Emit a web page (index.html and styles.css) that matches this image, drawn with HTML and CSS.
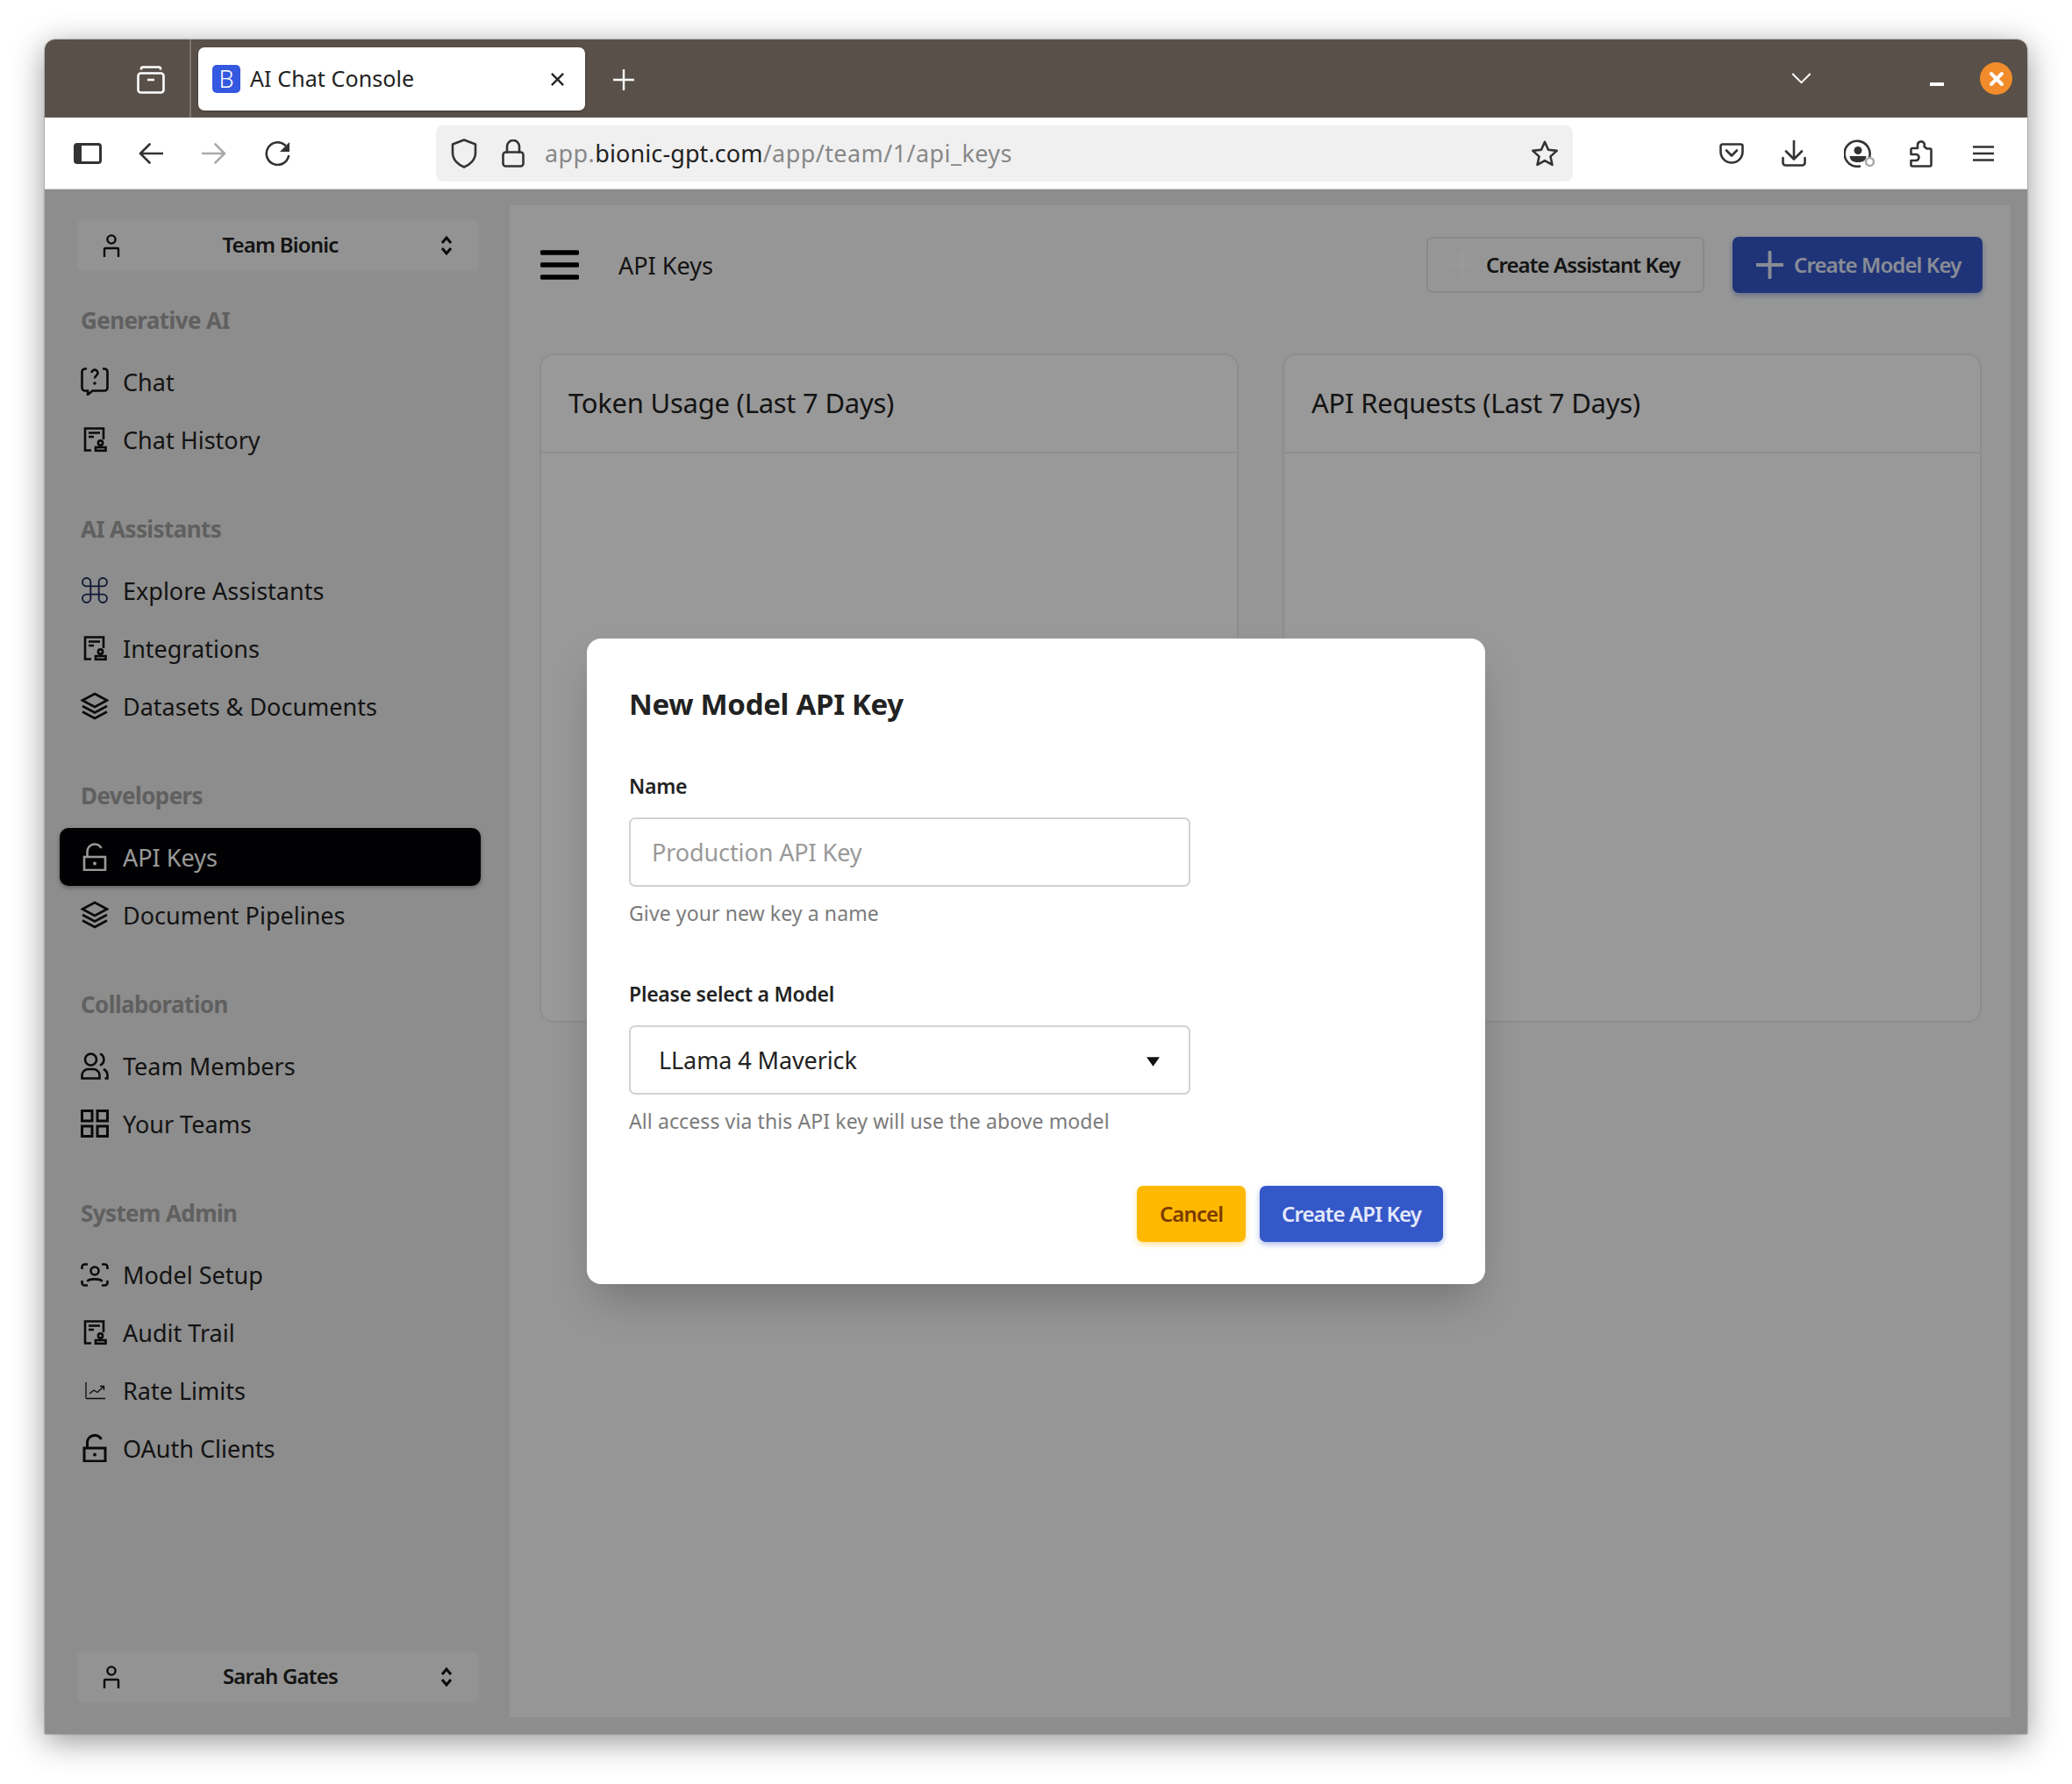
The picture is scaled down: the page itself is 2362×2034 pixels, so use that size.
FILE: index.html
```html
<!DOCTYPE html>
<html lang="en">
<head>
<meta charset="utf-8">
<title>AI Chat Console</title>
<link rel="stylesheet" href="styles.css">
</head>
<body>
<svg class="sprite" xmlns="http://www.w3.org/2000/svg">
  <symbol id="i-person" viewBox="0 0 20 26"><circle cx="10" cy="6" r="4.6"/><path d="M2 26v-9a1 1 0 0 1 1-1h14a1 1 0 0 1 1 1v9"/></symbol>
  <symbol id="i-updown" viewBox="0 0 14 24"><path d="M2 9l5-6 5 6M2 15l5 6 5-6"/></symbol>
  <symbol id="i-chat" viewBox="0 0 32 32"><path d="M7 1.500H5A3.500 3.500 0 0 0 1.500 5v18A3.500 3.500 0 0 0 5 26.500h3v4.500l5.500-4.500H27a3.500 3.500 0 0 0 3.500-3.500V5A3.500 3.500 0 0 0 27 1.500h-2"/><path d="M12.500 6a3.500 3.500 0 1 1 5.500 3c-1.400 1-2 1.600-2 3.500"/><circle class="dot" cx="16" cy="18" r="1.800"/></symbol>
  <symbol id="i-doc" viewBox="0 0 32 32"><path d="M12 28.500H5V3.500h21V16"/><path d="M9 8.500h13M9 13h6"/><circle cx="22.500" cy="20" r="2.600"/><rect x="17" y="25" width="11.500" height="3.800"/></symbol>
  <symbol id="i-cmd" viewBox="1.700 1.700 20.600 20.600"><path d="M15 6v12a3 3 0 1 0 3-3H6a3 3 0 1 0 3 3V6a3 3 0 1 0-3 3h12a3 3 0 1 0-3-3"/></symbol>
  <symbol id="i-layers" viewBox="0 0 32 32"><path d="M16 2L30 9.500 16 17 2 9.500zM2 16l14 7.500L30 16M2 22.500l14 7.500 14-7.500"/></symbol>
  <symbol id="i-lock" viewBox="0 0 32 32"><rect x="4" y="16" width="24" height="15"/><path d="M7.500 16V10a8.500 8.500 0 0 1 16-4"/><circle class="dot" cx="16" cy="23.500" r="2"/></symbol>
  <symbol id="i-users" viewBox="0 0 32 32"><circle cx="11.500" cy="9" r="6.500"/><path d="M1.500 30.500V27a7 7 0 0 1 7-7h6a7 7 0 0 1 7 7v3.500z"/><path d="M22 2.500a7 7 0 0 1 0 13M26 20c3 1.500 4.500 4 4.500 7v3.500h-3"/></symbol>
  <symbol id="i-grid" viewBox="0 0 32 32"><rect x="1.500" y="1.500" width="11.500" height="11.500"/><rect x="19" y="1.500" width="11.500" height="11.500"/><rect x="1.500" y="19" width="11.500" height="11.500"/><rect x="19" y="19" width="11.500" height="11.500"/></symbol>
  <symbol id="i-scan" viewBox="0 0 32 32"><path d="M8 4.500H4.500a3 3 0 0 0-3 3V10M24 4.500h3.500a3 3 0 0 1 3 3V10M8 28.500H4.500a3 3 0 0 1-3-3V23M24 28.500h3.500a3 3 0 0 0 3-3V23"/><circle cx="16" cy="12" r="4.500"/><path d="M7.500 24c2-3.500 15-3.500 17 0"/></symbol>
  <symbol id="i-chart" viewBox="0 0 32 32"><path d="M6 7v17.500a1 1 0 0 0 1 1h21"/><path d="M10 20l5-4 4 2.500 7-6.500M22 11.500h4.500V16"/></symbol>
  <symbol id="i-plus" viewBox="0 0 32 32"><path d="M16 1v30M1 16h30"/></symbol>
</svg>

<div class="window">
  <header class="tabbar">
    <div class="tabbar-left">
      <svg class="ff-archive" viewBox="0 0 32 32"><path d="M5 4.500V3.500a2 2 0 0 1 2-2h18a2 2 0 0 1 2 2v1"/><rect x="1.500" y="8.500" width="29" height="22" rx="3"/><path d="M12 16h8"/></svg>
    </div>
    <div class="tab">
      <span class="favicon">B</span>
      <span class="tab-title">AI Chat Console</span>
      <svg class="tab-close" viewBox="0 0 18 18"><path d="M2 2l14 14M16 2L2 16"/></svg>
    </div>
    <svg class="new-tab" viewBox="0 0 24 24"><path d="M12 0v24M0 12h24"/></svg>
    <svg class="tab-list" viewBox="0 0 24 14"><path d="M1 1l11 11L23 1"/></svg>
    <span class="win-min"></span>
    <span class="win-close"><svg viewBox="0 0 18 18"><path d="M3 3l12 12M15 3L3 15"/></svg></span>
  </header>

  <nav class="toolbar">
    <svg class="tb tb-sidebar" viewBox="0 0 32 24"><rect x="1.500" y="1.500" width="29" height="21" rx="2.500"/><path class="fill" d="M1.500 3a1.500 1.500 0 0 1 1.500-1.500h6v21H3A1.500 1.500 0 0 1 1.500 21z"/></svg>
    <svg class="tb tb-back" viewBox="0 0 28 24"><path d="M28 12H2M12.500 1.500L2 12l10.500 10.500"/></svg>
    <svg class="tb tb-forward" viewBox="0 0 28 24"><path d="M0 12h26M15.500 1.500L26 12 15.500 22.500"/></svg>
    <svg class="tb tb-reload" viewBox="0 0 30 28"><path d="M28 17A12.800 12.800 0 1 1 24 4.500"/><path class="fill" d="M29 1v11H18z"/></svg>
    <div class="urlbar">
      <svg class="tb-shield" viewBox="0 0 30 34"><path d="M15 1.500L28 6.500v10c0 8-7 13.500-13 16-6-2.500-13-8-13-16v-10z"/></svg>
      <svg class="tb-lock" viewBox="0 0 26 32"><rect x="1.500" y="14.500" width="23" height="16" rx="3"/><path d="M6 14.500V8a7 7 0 0 1 14 0v6.500"/></svg>
      <span class="url"><span class="url-dim">app.</span>bionic-gpt.com<span class="url-dim">/app/team/1/api_keys</span></span>
      <svg class="tb-star" viewBox="0 0 32 30"><path d="M16 1.800l4 9 9.700 1.100-7.200 6.500 2 9.500L16 23.100l-8.500 4.800 2-9.500L2.300 11.900 12 10.800z"/></svg>
    </div>
    <svg class="tb tb-pocket" viewBox="0 0 28 24"><path d="M3.500 1.500h21a2 2 0 0 1 2 2V10a12.500 12.500 0 0 1-25 0V3.500a2 2 0 0 1 2-2z"/><path d="M8 8.500l6 6 6-6"/></svg>
    <svg class="tb tb-download" viewBox="0 0 28 30"><path d="M14 0v21M5 12.500l9 9 9-9M1.500 20v5.500a3 3 0 0 0 3 3h19a3 3 0 0 0 3-3V20"/></svg>
    <svg class="tb tb-account" viewBox="0 0 36 32"><path d="M29 20.500A14.500 14.500 0 1 0 18 30.500"/><circle class="fill" cx="16" cy="12.500" r="4.500"/><path class="fill" d="M6.500 19h19c-.5 4.500-3 7-9.500 7s-9-2.500-9.500-7z"/><circle class="ring" cx="29.500" cy="25.500" r="4.500"/></svg>
    <svg class="tb tb-puzzle" viewBox="0 0 26 32"><path d="M9 10V6.500a4 4 0 0 1 7.500-2c.6 1.200.5 2.500 0 3.500l3 2.500h3.500a1.500 1.500 0 0 1 1.500 1.500v17a1.500 1.500 0 0 1-1.500 1.500H3a1.500 1.500 0 0 1-1.500-1.500V24H7a3.500 3.500 0 0 0 0-7H1.500v-5.500A1.500 1.500 0 0 1 3 10z"/></svg>
    <svg class="tb tb-menu" viewBox="0 0 24 18"><path d="M0 1.500h24M0 9h24M0 16.500h24"/></svg>
  </nav>

  <div class="content">
    <aside class="sidebar">
      <button class="switcher switcher-top" type="button">
        <svg class="sw-person"><use href="#i-person"/></svg>
        <span>Team Bionic</span>
        <svg class="sw-updown"><use href="#i-updown"/></svg>
      </button>

      <section class="group">
        <h3>Generative AI</h3>
        <a class="item"><svg><use href="#i-chat"/></svg>Chat</a>
        <a class="item"><svg><use href="#i-doc"/></svg>Chat History</a>
      </section>
      <section class="group">
        <h3>AI Assistants</h3>
        <a class="item"><svg class="navy thin"><use href="#i-cmd"/></svg>Explore Assistants</a>
        <a class="item"><svg><use href="#i-doc"/></svg>Integrations</a>
        <a class="item"><svg><use href="#i-layers"/></svg>Datasets &amp; Documents</a>
      </section>
      <section class="group">
        <h3>Developers</h3>
        <a class="item active"><svg><use href="#i-lock"/></svg>API Keys</a>
        <a class="item"><svg><use href="#i-layers"/></svg>Document Pipelines</a>
      </section>
      <section class="group">
        <h3>Collaboration</h3>
        <a class="item"><svg><use href="#i-users"/></svg>Team Members</a>
        <a class="item"><svg class="heavy"><use href="#i-grid"/></svg>Your Teams</a>
      </section>
      <section class="group">
        <h3>System Admin</h3>
        <a class="item"><svg><use href="#i-scan"/></svg>Model Setup</a>
        <a class="item"><svg><use href="#i-doc"/></svg>Audit Trail</a>
        <a class="item"><svg class="hair"><use href="#i-chart"/></svg>Rate Limits</a>
        <a class="item"><svg class="heavy"><use href="#i-lock"/></svg>OAuth Clients</a>
      </section>

      <button class="switcher switcher-bottom" type="button">
        <svg class="sw-person"><use href="#i-person"/></svg>
        <span>Sarah Gates</span>
        <svg class="sw-updown"><use href="#i-updown"/></svg>
      </button>
    </aside>

    <main class="panel">
      <div class="panel-head">
        <svg class="burger" viewBox="0 0 44 34"><path d="M2 3h40M2 17h40M2 31h40"/></svg>
        <span class="crumb">API Keys</span>
        <button class="btn btn-outline" type="button"><svg class="plus plus-faint"><use href="#i-plus"/></svg>Create Assistant Key</button>
        <button class="btn btn-primary" type="button"><svg class="plus"><use href="#i-plus"/></svg>Create Model Key</button>
      </div>
      <div class="cards">
        <article class="card"><h2>Token Usage (Last 7 Days)</h2></article>
        <article class="card"><h2>API Requests (Last 7 Days)</h2></article>
      </div>
    </main>

    <div class="backdrop">
      <form class="modal">
        <h1>New Model API Key</h1>
        <div class="field">
          <label for="key-name">Name</label>
          <input id="key-name" type="text" placeholder="Production API Key">
          <p class="help">Give your new key a name</p>
        </div>
        <div class="field">
          <label for="key-model">Please select a Model</label>
          <div class="select-wrap">
            <select id="key-model"><option>LLama 4 Maverick</option></select>
            <svg class="select-arrow" viewBox="0 0 16 11"><path d="M0 0h16L8 11z"/></svg>
          </div>
          <p class="help">All access via this API key will use the above model</p>
        </div>
        <div class="modal-actions">
          <button class="btn btn-warning" type="button">Cancel</button>
          <button class="btn btn-primary btn-modal" type="button">Create API Key</button>
        </div>
      </form>
    </div>
  </div>
</div>
</body>
</html>
```

FILE: styles.css
```css
* { box-sizing: border-box; }
html, body { margin: 0; height: 100%; }
body {
  background: #fff;
  padding: 45px 51px 57px 51px;
  font-family: "Noto Sans", "Open Sans", sans-serif;
  color: #222;
}
.sprite { display: none; }

.window {
  height: 1932px;
  display: flex;
  flex-direction: column;
  border-radius: 12px 12px 0 0;
  overflow: hidden;
  box-shadow: 0 8px 36px rgba(0, 0, 0, .42), 0 0 2px rgba(0, 0, 0, .5);
}

/* Browser chrome */
.tabbar {
  height: 89px;
  flex: none;
  background: #595049;
  display: flex;
  align-items: flex-start;
}
.tabbar-left {
  width: 167px;
  height: 100%;
  border-right: 2px solid #7d7670;
  padding: 30px 0 0 105px;
  flex: none;
}
.ff-archive { width: 32px; height: 32px; display: block; fill: none; stroke: #fff; stroke-width: 2.6; }
.tab {
  margin: 9px 0 0 8px;
  width: 441px;
  height: 72px;
  background: #fff;
  border-radius: 7px;
  display: flex;
  align-items: center;
  padding: 0 23px 0 16px;
  box-shadow: 0 1px 3px rgba(0, 0, 0, .3);
}
.favicon {
  width: 32px;
  height: 32px;
  border-radius: 5px;
  background: #3558e0;
  color: #fff;
  font-size: 27px;
  font-weight: 300;
  line-height: 31px;
  text-align: center;
  flex: none;
}
.tab-title { margin: 0 0 2px 11px; font-size: 25px; letter-spacing: .1px; color: #222; flex: 1; white-space: nowrap; }
.tab-close { width: 17px; height: 17px; fill: none; stroke: #222; stroke-width: 2.4; }
.new-tab { width: 24px; height: 24px; margin: 34px 0 0 32px; fill: none; stroke: #fff; stroke-width: 2.4; flex: none; }
.tab-list { width: 23px; height: 13px; margin: 38px 0 0 1319px; fill: none; stroke: #fff; stroke-width: 2.2; flex: none; }
.win-min { width: 16px; height: 4px; margin: 49px 0 0 135px; background: #fff; flex: none; }
.win-close {
  width: 37px;
  height: 37px;
  margin: 26px 0 0 41px;
  border-radius: 50%;
  background: #f28c2b;
  display: flex;
  align-items: center;
  justify-content: center;
  flex: none;
}
.win-close svg { width: 18px; height: 18px; fill: none; stroke: #fff; stroke-width: 4; stroke-linecap: round; }

.toolbar {
  height: 82px;
  flex: none;
  background: #fff;
  display: flex;
  align-items: center;
  border-bottom: 1px solid #d4d4d4;
}
.tb, .toolbar .urlbar svg { fill: none; stroke: #333; stroke-width: 2.6; flex: none; stroke-linejoin: round; stroke-linecap: round; }
.toolbar .fill { fill: #333; stroke: none; }
.tb-sidebar { width: 32px; height: 24px; margin-left: 33px; stroke-width: 3; }
.tb-back { width: 28px; height: 24px; margin-left: 42px; }
.tb-forward { width: 28px; height: 24px; margin-left: 44px; stroke: #aaa; }
.tb-reload { width: 30px; height: 28px; margin-left: 43px; }
.urlbar {
  width: 1296px;
  height: 64px;
  margin-left: 166px;
  background: #f0f0f0;
  border-radius: 8px;
  display: flex;
  align-items: center;
  padding: 0 16px 0 17px;
  flex: none;
}
.tb-shield { width: 30px; height: 34px; }
.tb-lock { width: 26px; height: 32px; margin-left: 28px; }
.url { margin-left: 23px; font-size: 27px; letter-spacing: .1px; color: #222; flex: 1; white-space: nowrap; }
.url-dim { color: #888; letter-spacing: .42px; }
.tb-star { width: 32px; height: 30px; }
.tb-pocket { width: 28px; height: 24px; margin-left: 167px; }
.tb-download { width: 28px; height: 30px; margin-left: 43px; }
.tb-account { width: 36px; height: 32px; margin-left: 43px; }
.tb-account .ring { fill: #fff; stroke: #aaa; stroke-width: 2.6; }
.tb-puzzle { width: 26px; height: 32px; margin-left: 39px; }
.tb-menu { width: 24px; height: 18px; margin-left: 46px; }

/* App */
.content {
  flex: 1;
  min-height: 0;
  position: relative;
  display: flex;
  background: #ebebeb;
}
.sidebar {
  width: 529px;
  flex: none;
  display: flex;
  flex-direction: column;
  padding: 34px 0 35px;
}
.switcher {
  width: 460px;
  height: 60px;
  margin-left: 36px;
  flex: none;
  background: #f6f6f6;
  border: 2px solid #f1f1f1;
  border-radius: 8px;
  display: flex;
  align-items: center;
  padding: 0 29px 0 28px;
  font: 600 24px "Noto Sans", sans-serif;
  letter-spacing: -.8px;
  color: #222;
}
.switcher span { flex: 1; text-align: center; margin-bottom: 3px; }
.sw-person { width: 20px; height: 26px; flex: none; fill: none; stroke: #111; stroke-width: 2.400; }
.sw-updown { width: 14px; height: 24px; flex: none; fill: none; stroke: #111; stroke-width: 3; }
.switcher-bottom { margin-top: auto; }

.group { margin-top: 35px; margin-bottom: 14px; }
.group h3 {
  margin: 0 0 17px 41px;
  height: 40px;
  line-height: 40px;
  font-size: 26px;
  font-weight: 700;
  letter-spacing: -.6px;
  color: #a0a0a0;
}
.item {
  display: flex;
  align-items: center;
  gap: 16px;
  width: 480px;
  height: 66px;
  margin-left: 17px;
  padding-left: 24px;
  border-radius: 10px;
  font-size: 27px;
  color: #222;
}
.item svg { width: 32px; height: 32px; flex: none; fill: none; color: #111; stroke: #111; stroke-width: 2.600; }
.item svg.navy { stroke: #1c2a5a; }
.item svg.thin { stroke-width: 1.200; }
.item svg.heavy { stroke-width: 3; }
.item svg.hair { stroke-width: 1.300; }
.dot { fill: currentColor; stroke: none; }
.item.active {
  background: #030306;
  color: #fff;
  box-shadow: 0 2px 5px rgba(0, 0, 0, .35);
}
.item.active svg { color: #fff; stroke: #fff; }

.panel {
  flex: 1;
  margin: 17px 18px 18px 0;
  background: #fbfbfb;
  border: 1px solid #ececec;
  padding: 36px 32px 0 35px;
}
.panel-head { display: flex; align-items: center; height: 64px; }
.burger { width: 44px; height: 34px; fill: none; stroke: #000; stroke-width: 5.500; stroke-linecap: round; flex: none; }
.crumb { margin-left: 45px; font-size: 27px; flex: 1; color: #222; }
.btn {
  height: 64px;
  border-radius: 7px;
  display: inline-flex;
  align-items: center;
  font: 600 24px "Noto Sans", sans-serif;
  letter-spacing: -.9px;
  white-space: nowrap;
  padding: 0 23px 2px;
  border: 0;
}
.btn-outline { width: 317px; margin-right: 32px; background: transparent; border: 2px solid #e5e5e5; color: #222; }
.btn-primary { background: #3558c8; color: #e4e9fb; box-shadow: 0 3px 6px rgba(53, 88, 200, .4); }
.panel-head .btn-primary { width: 285px; padding-left: 27px; }
.plus { width: 31px; height: 32px; margin-top: 2px; fill: none; stroke: #e4e9fb; stroke-width: 4; stroke-linecap: round; margin-right: 12px; flex: none; }
.plus-faint { stroke: #fff; }

.cards { display: grid; grid-template-columns: 797px 797px; gap: 50px; margin: 69px 0 0 -1px; }
.card {
  height: 763px;
  background: #fff;
  border: 2px solid #ececec;
  border-radius: 16px;
}
.card h2 {
  margin: 0;
  height: 112px;
  padding: 0 0 2px 31px;
  display: flex;
  align-items: center;
  font-size: 31px;
  font-weight: 400;
  letter-spacing: -.25px;
  color: #222;
  border-bottom: 2px solid #ececec;
}

/* Modal */
.backdrop {
  position: absolute;
  inset: 0;
  padding-bottom: 1px;
  background: rgba(0, 0, 0, .4);
  display: flex;
  align-items: center;
  justify-content: center;
}
.modal {
  width: 1024px;
  height: 736px;
  background: #fff;
  border-radius: 16px;
  padding: 48px;
  box-shadow: 0 25px 50px -12px rgba(0, 0, 0, .25);
}
.modal h1 {
  margin: 0 0 50px;
  height: 54px;
  line-height: 54px;
  font-size: 33px;
  font-weight: 700;
  letter-spacing: -.3px;
  color: #222;
}
.field { margin-bottom: 58px; width: 640px; }
.field + .field { margin-bottom: 56px; }
.field label {
  display: block;
  height: 36px;
  line-height: 33px;
  margin-bottom: 16px;
  font-size: 23px;
  font-weight: 600;
  letter-spacing: -.25px;
  color: #222;
  white-space: nowrap;
}
.field input, .field select {
  display: block;
  width: 100%;
  height: 79px;
  border: 2px solid #d2d2d2;
  border-radius: 7px;
  background: #fff;
  font: 400 27px "Noto Sans", sans-serif;
  letter-spacing: -.1px;
  color: #222;
  padding: 0 24px;
  outline: 0;
  appearance: none;
}
.field select { padding-left: 32px; }
.field input::placeholder { color: #999; opacity: 1; }
.select-wrap { position: relative; }
.select-arrow { position: absolute; right: 35px; top: 36px; width: 15px; height: 11px; fill: #111; }
.help {
  margin: 12px 0 0;
  height: 36px;
  line-height: 36px;
  font-size: 23px;
  letter-spacing: .1px;
  color: #7b7b7b;
  white-space: nowrap;
}
.modal-actions { display: flex; justify-content: flex-end; gap: 16px; }
.btn-warning { width: 124px; justify-content: center; background: #ffb800; color: #7a3b00; box-shadow: 0 3px 6px rgba(255, 184, 0, .4); }
.btn-modal { width: 209px; justify-content: center; }
```
